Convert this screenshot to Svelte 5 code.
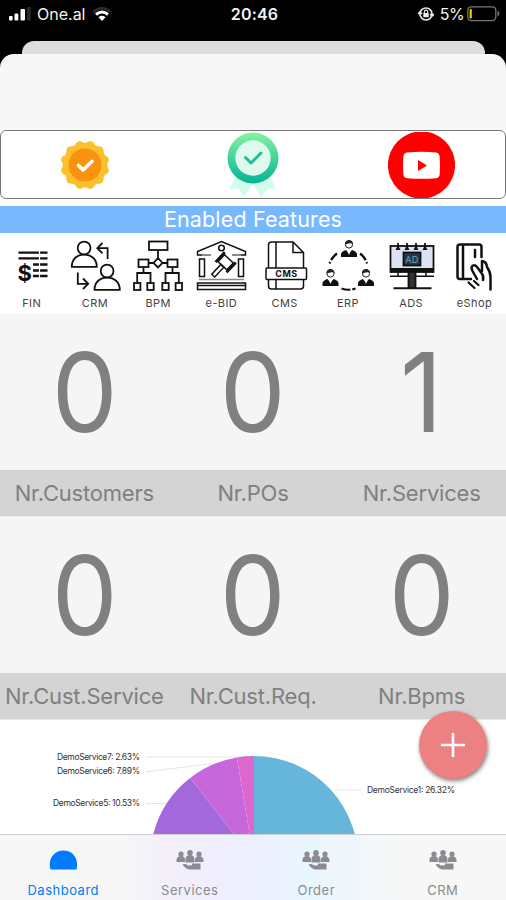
<script>
    const stats = [
        [
            { label: 'Nr.Customers', value: 0 },
            { label: 'Nr.POs', value: 0 },
            { label: 'Nr.Services', value: 1 },
        ],
        [
            { label: 'Nr.Cust.Service', value: 0 },
            { label: 'Nr.Cust.Req.', value: 0 },
            { label: 'Nr.Bpms', value: 0 },
        ],
    ];

    const features = ['FIN', 'CRM', 'BPM', 'e-BID', 'CMS', 'ERP', 'ADS', 'eShop'];
    const tabs = ['Dashboard', 'Services', 'Order', 'CRM'];

    // pie is drawn clockwise from 12 o'clock, in percent
    const slices = [
        { from: 0, to: 26.32, color: '#66b5db' },
        { from: 26.32, to: 78.95, color: '#6771dc' },
        { from: 78.95, to: 89.48, color: '#a268dc' },
        { from: 89.48, to: 97.37, color: '#c767dc' },
        { from: 97.37, to: 100, color: '#dc67ce' },
    ];
    const cx = 254;
    const cy = 140;
    const r = 104;

    function point(percent) {
        const a = (percent / 100) * Math.PI * 2;
        return `${cx + r * Math.sin(a)} ${cy - r * Math.cos(a)}`;
    }

    function slicePath(s) {
        const large = s.to - s.from > 50 ? 1 : 0;
        return `M${cx} ${cy}L${point(s.from)}A${r} ${r} 0 ${large} 1 ${point(s.to)}Z`;
    }

    // twelve-lobed seal
    const seal = Array.from({ length: 73 }, (_, i) => {
        const a = ((i + 3) / 72) * Math.PI * 2;
        const d = 23.4 + 1.3 * Math.cos(12 * (a - Math.PI / 12));
        return `${(25 + d * Math.cos(a)).toFixed(2)},${(25 + d * Math.sin(a)).toFixed(2)}`;
    }).join(' ');

    let active = 'Dashboard';
</script>

{#snippet worker(x, y)}
    <g transform="translate({x} {y})">
        <circle cx="0" cy="5" r="3.6" fill="#fff" stroke="#222" stroke-width="1" />
        <path d="M-4 5C-4.500-1 4.500-1 4 5C2 2.500-1 4-4 5Z" fill="#222" stroke="none" />
        <path d="M-8 17.500V14.500Q-7.500 12-3 10.500L0 14L3 10.500Q7.500 12 8 14.500V17.500Z" fill="#111" stroke="none" />
        <path d="M-2 10.500L0 15.500L2 10.500Z" fill="#fff" stroke="none" />
    </g>
{/snippet}

<div class="screen">
    <header class="status">
        <div class="side">
            <svg class="signal" width="22" height="14" viewBox="0 0 22 14" fill="#fff">
                <rect x="0" y="9" width="3.600" height="4.500" rx="1" />
                <rect x="5.500" y="6.500" width="3.800" height="7" rx="1" />
                <rect x="11.500" y="2" width="4.500" height="11.500" rx="1" />
                <rect x="18" y="0" width="3.800" height="13.500" rx="1" fill="#2a2a2a" />
            </svg>
            <span class="carrier">One.al</span>
            <svg class="wifi" width="20" height="15" viewBox="0 0 20 15" fill="none" stroke-width="2.400">
                <path d="M1.500 5Q10-2.500 18.500 5" stroke="#2d2d2d" />
                <path d="M4 7.500Q10 2.500 16 7.500" stroke="#fff" stroke-width="3" />
                <path d="M6.500 10.200Q10 7.300 13.500 10.200L10 14Z" fill="#fff" />
            </svg>
        </div>
        <span class="time">20:46</span>
        <div class="side right">
            <svg class="lock" width="16" height="14" viewBox="0 0 16 14" fill="none" stroke="#eee" stroke-width="1.600">
                <path d="M3.500 11A6 6 0 1 1 12.500 11A6 6 0 0 1 3.500 11M0 7L2 5L4 7M12 7L14 9L16 7" />
                <rect x="5.300" y="6" width="5.400" height="4.200" rx="0.500" fill="#eee" stroke="none" />
                <path d="M6.300 6V4.800A1.700 1.700 0 0 1 9.700 4.800V6" stroke-width="1.100" />
            </svg>
            <span class="percent">5%</span>
            <svg class="battery" width="33" height="16" viewBox="0 0 33 16">
                <rect x="0.800" y="0.800" width="28" height="13.800" rx="3.500" fill="none" stroke="#777" stroke-width="1.300" />
                <rect x="2.600" y="3" width="2.200" height="9.500" rx="0.800" fill="#f6cd00" />
                <path d="M30.500 5V10.500Q32.500 9.500 32.500 7.700T30.500 5Z" fill="#777" />
            </svg>
        </div>
    </header>

    <div class="sheet-behind"></div>

    <main class="sheet">
        <section class="badges">
            <div class="badge">
                <svg width="50" height="50" viewBox="0 0 50 50">
                    <polygon points={seal} fill="#fdbf2e" />
                    <circle cx="25" cy="25" r="16.500" fill="#f7930f" />
                    <path d="M18.500 25.500L23 30L32 21.500" fill="none" stroke="#fff" stroke-width="3.600" stroke-linecap="round" stroke-linejoin="round" />
                </svg>
            </div>
            <div class="badge">
                <svg width="52" height="66" viewBox="0 0 52 66">
                    <defs>
                        <linearGradient id="medal" x1="0" y1="0" x2="0" y2="1">
                            <stop offset="0" stop-color="#86f3a0" />
                            <stop offset="1" stop-color="#05b395" />
                        </linearGradient>
                    </defs>
                    <path d="M10 42L2.500 57L11 56.500L17.500 65L25.500 51L34 65L40.500 56.500L49 57L41.500 42Z" fill="#d1fce9" />
                    <circle cx="26" cy="26" r="25.500" fill="url(#medal)" />
                    <circle cx="26" cy="26" r="17.700" fill="#dcfbee" />
                    <path d="M18.500 25.500L24 31L34 21" fill="none" stroke="#22bd95" stroke-width="3" stroke-linecap="round" stroke-linejoin="round" />
                </svg>
            </div>
            <div class="badge">
                <svg width="67" height="66" viewBox="0 0 67 66">
                    <circle cx="33.500" cy="33" r="33.600" fill="#fe0000" />
                    <path d="M19 20.500Q33.500 19 48 20.500Q51.500 21 51.700 25Q52.300 33.500 51.700 42Q51.500 45.800 48 46.200Q33.500 47.500 19 46.200Q15.500 45.800 15.300 42Q14.700 33.500 15.300 25Q15.500 21 19 20.500Z" fill="#fff" />
                    <path d="M30 28L39 33.500L30 39Z" fill="#fe0000" />
                </svg>
            </div>
        </section>

        <h2 class="banner">Enabled Features</h2>

        <section class="features">
            {#each features as feature}
                <div class="feature">
                    <svg width="54" height="54" viewBox="0 0 54 54" fill="none" stroke="#111" stroke-width="1.800">
                        {#if feature === 'FIN'}
                            <path d="M13.500 13.700H42.500M13.500 19.300H42.500M28 25.500H42.500M28 31.500H42.500M28 37H42.500" stroke-width="2.300" />
                            <path d="M34.500 11V39" stroke="#fff" stroke-width="1.200" />
                            <text class="dollar" x="12.500" y="42">$</text>
                        {:else if feature === 'CRM'}
                            <circle cx="16.100" cy="9" r="6.400" />
                            <path d="M3.800 27.800C3.800 20 9 15.600 16.100 15.600S28.800 20 28.800 27.800Z" />
                            <circle cx="39.100" cy="32" r="6.400" />
                            <path d="M26.500 50.800C26.500 43 32 38.600 39.100 38.600S51.800 43 51.800 50.800Z" />
                            <path d="M39.600 20V9.200H29.500M34.500 4L29.300 9.200L34.500 14.400" />
                            <path d="M9.800 33.500V44.800H20M15 39.500L20.200 44.800L15 50" />
                        {:else if feature === 'BPM'}
                            <rect x="18" y="2.500" width="18.500" height="8.500" />
                            <path d="M27 11V19M27 19L31.500 24L27 28.500L22.500 24ZM17.500 24H22.500M31.500 24H36.500" />
                            <rect x="7.500" y="20.500" width="10" height="7.500" />
                            <rect x="36.500" y="20.500" width="10" height="7.500" />
                            <path d="M12.500 28V34M6.200 44V34H19.500V44M41.500 28V34M34.500 44V34H47.800V44" />
                            <rect x="3" y="44" width="6.400" height="7" />
                            <rect x="16.300" y="44" width="6.400" height="7" />
                            <rect x="31.300" y="44" width="6.400" height="7" />
                            <rect x="44.600" y="44" width="6.400" height="7" />
                        {:else if feature === 'e-BID'}
                            <g stroke-width="1.500">
                                <path d="M8 16H3.500V12.500L27.500 2.500L51.500 12.500V16H47" />
                                <circle cx="27.500" cy="9" r="2.800" />
                                <path d="M8 16H17M38 16H47" stroke="#666" />
                                <rect x="5.500" y="20" width="5" height="17.500" />
                                <rect x="44.500" y="20" width="5" height="17.500" />
                                <path d="M5 40.500H50" stroke="#888" />
                                <rect x="3.500" y="44" width="48" height="6.500" />
                                <path d="M3.500 46.500H51.500" />
                                <g transform="rotate(43 31.500 23.500)">
                                    <rect x="25.500" y="18.500" width="12" height="9.500" />
                                    <path d="M24 16.500V30M39 16.500V30" stroke-width="2.800" />
                                    <rect x="29.500" y="28" width="4" height="13.500" />
                                </g>
                            </g>
                        {:else if feature === 'CMS'}
                            <g stroke-width="1.500">
                                <path d="M10.500 29V6Q10.500 3 13.500 3H35L45.500 13.500V29M35 3V13.500H45.500M18 3V29M18 40.500V50M10.500 40.500V47Q10.500 50 13.500 50H42.500Q45.500 50 45.500 47V40.500" />
                                <rect x="8" y="29" width="40.500" height="11.500" rx="1" />
                            </g>
                            <text class="cms" x="28.500" y="38.200" text-anchor="middle">CMS</text>
                        {:else if feature === 'ERP'}
                            {@render worker(28, 0.5)}
                            {@render worker(9.5, 29.5)}
                            {@render worker(45, 29.5)}
                            <path d="M39 14.500Q44 18 46 24.500M16 14.500Q11 18 8.500 24.500M20.500 49.500Q27.500 52 34.500 49.500" stroke-width="2.200" stroke-dasharray="9 2" />
                        {:else if feature === 'ADS'}
                            <rect x="6.500" y="7" width="43" height="26" fill="#dce2f2" />
                            <path d="M6 31H50" stroke-width="4" />
                            <rect x="19.500" y="13.500" width="17" height="13" fill="#26394a" />
                            <text class="ad" x="28" y="23.500" text-anchor="middle">AD</text>
                            <path d="M14 4V8M23 4V8M32 4V8M41 4V8" />
                            <path d="M11.500 11L14 6L16.500 11ZM20.500 11L23 6L25.500 11ZM29.500 11L32 6L34.500 11ZM38.500 11L41 6L43.500 11Z" fill="#111" stroke="none" />
                            <path d="M6 37.200H50M14 33V38M42 33V38" stroke-width="1.500" />
                            <rect x="24.500" y="33" width="7" height="16" fill="#333" />
                            <path d="M9.500 49.300H47.500" stroke-width="2" />
                        {:else}
                            <g stroke-width="2.500" stroke-linecap="round" stroke-linejoin="round">
                                <path d="M34.500 18V8Q34.500 5.500 32 5.500H13Q10.500 5.500 10.500 8V37.500Q10.500 40 13 40H24M16 6V40M28 11V18" />
                                <path d="M30 40L25.500 32Q23.500 28 26 26.500Q28 25.500 30 28L34.500 34Q37 37 36 41M35 32V22Q39.500 22.500 40 28Q43.500 33 43.500 38V50.500" />
                                <path d="M21.500 43.500L27.500 49M27 42L31.500 46" stroke-width="2.200" />
                            </g>
                        {/if}
                    </svg>
                    <span>{feature}</span>
                </div>
            {/each}
        </section>

        {#each stats as row}
            <section class="stats">
                {#each row as stat}
                    <div class="stat">
                        <div class="value"><span>{stat.value}</span></div>
                        <div class="label">{stat.label}</div>
                    </div>
                {/each}
            </section>
        {/each}

        <section class="chart">
            <svg width="506" height="250" viewBox="0 0 506 250">
                <g fill="none" stroke="#e6e6e6">
                    <path d="M146 37H232L249 36.500" />
                    <path d="M146 52L165 49.500L212 43.500" />
                    <path d="M146 83.500H172" />
                    <path d="M334 70H362" />
                </g>
                {#each slices as s}
                    <path d={slicePath(s)} fill={s.color} />
                {/each}
                <text x="57" y="39.500" textLength="83">DemoService7: 2.63%</text>
                <text x="57" y="54" textLength="83">DemoService6: 7.89%</text>
                <text x="53" y="86" textLength="87">DemoService5: 10.53%</text>
                <text x="367" y="72.500" textLength="88">DemoService1: 26.32%</text>
            </svg>
        </section>

        <button class="fab" aria-label="Add">
            <svg width="26" height="26" viewBox="0 0 26 26" stroke="#fff" stroke-width="2.600">
                <path d="M13 1V25M1 13H25" />
            </svg>
        </button>
    </main>

    <nav class="tabs">
        {#each tabs as tab}
            <button class="tab" class:active={tab === active} on:click={() => (active = tab)}>
                <svg width="28" height="20" viewBox="0 0 28 20" fill="currentColor">
                    {#if tab === 'Dashboard'}
                        <path d="M1.500 19.500C-1.500 9 5 0.500 14.500 0.500S30 9 27.500 19.500Z" />
                    {:else}
                        <circle cx="5" cy="4" r="2.600" />
                        <circle cx="14" cy="2.800" r="2.800" />
                        <circle cx="23" cy="4" r="2.600" />
                        <path d="M0.500 12V9.500Q1 6 5 6T9 9.500V12ZM9.500 12.500V9Q10 5 14 5T18.500 9V12.500ZM19 12V9.500Q19.500 6 23 6T27.500 9.500V12Z" />
                        <path d="M6.500 14.500Q9 13.300 12 15.500L16 15.200V13.500H24.500V19.500H13Q9 18.500 6.500 14.500Z" />
                    {/if}
                </svg>
                <span>{tab}</span>
            </button>
        {/each}
    </nav>
</div>

<style>
    :global(body) {
        margin: 0;
        background: #000;
    }
    .screen {
        width: 506px;
        height: 900px;
        display: flex;
        flex-direction: column;
        overflow: hidden;
        background: #000;
        font-family: Inter, "Liberation Sans", sans-serif;
    }
    svg {
        display: block;
        flex: none;
    }
    button {
        border: none;
        padding: 0;
        font-family: inherit;
    }

    .status {
        height: 41px;
        flex: none;
        display: grid;
        grid-template-columns: 1fr auto 1fr;
        box-sizing: border-box;
        padding: 3px 6px 16px 9px;
        align-items: center;
        color: #f2f2f2;
        font-size: 16px;
    }
    .side {
        display: flex;
        align-items: center;
    }
    .right {
        justify-content: flex-end;
    }
    .carrier {
        margin: 0 7px 0 6px;
    }
    .time {
        font-weight: 600;
        letter-spacing: 0.2px;
    }
    .percent {
        margin: 0 3px 0 6px;
        letter-spacing: -0.6px;
    }

    .sheet-behind {
        height: 13px;
        flex: none;
        margin: 0 21px 0 22px;
        border-radius: 12px 12px 0 0;
        background: #dedede;
    }
    .sheet {
        position: relative;
        flex: 1;
        min-height: 0;
        display: flex;
        flex-direction: column;
        overflow: hidden;
        padding-top: 76px;
        border-radius: 14px 14px 0 0;
        background: linear-gradient(#f7f7f7 76px, #fff 76px);
    }

    .badges {
        height: 69px;
        flex: none;
        box-sizing: border-box;
        display: grid;
        grid-template-columns: repeat(3, 1fr);
        border: 1.5px solid #777;
        border-radius: 6px;
    }
    .badge {
        display: flex;
        align-items: center;
        justify-content: center;
    }

    .banner {
        flex: none;
        height: 27px;
        margin: 7px 0 0;
        background: #78b8ff;
        color: #fff;
        font-size: 21.5px;
        font-weight: 400;
        line-height: 27px;
        letter-spacing: 0.15px;
        text-align: center;
    }

    .features {
        height: 81px;
        flex: none;
        display: grid;
        grid-template-columns: repeat(8, 1fr);
        box-sizing: border-box;
        padding-top: 6px;
    }
    .feature {
        display: flex;
        flex-direction: column;
        align-items: center;
        color: #444;
        font-size: 11px;
        line-height: 14px;
        letter-spacing: 0.4px;
    }
    .feature span {
        margin-top: 3px;
    }
    .dollar {
        font-size: 22px;
        font-weight: 700;
        fill: #111;
        stroke: none;
    }
    .cms {
        font-size: 9px;
        font-weight: 700;
        letter-spacing: 0.5px;
        fill: #111;
        stroke: none;
    }
    .ad {
        font-size: 9px;
        fill: #6f9cb0;
        stroke: none;
    }

    .stats {
        flex: none;
        display: grid;
        grid-template-columns: repeat(3, 1fr);
        color: #808080;
        text-align: center;
        border-bottom: 1px solid #ececec;
    }
    .value {
        height: 156px;
        background: #f5f5f5;
        font-size: 110px;
        line-height: 156px;
    }
    .value span {
        display: inline-block;
        transform: scaleX(0.95);
    }
    .label {
        height: 46px;
        background: #d4d4d4;
        font-size: 22px;
        line-height: 46px;
        letter-spacing: -0.2px;
        white-space: nowrap;
    }

    .chart {
        flex: 1;
        min-height: 0;
        overflow: hidden;
    }
    .chart text {
        font-size: 8.5px;
        fill: #333;
    }

    .fab {
        position: absolute;
        top: 657px;
        right: 19px;
        width: 68px;
        height: 68px;
        display: flex;
        align-items: center;
        justify-content: center;
        border-radius: 50%;
        background: #ed8080;
        box-shadow: 1px 2px 4px rgba(0, 0, 0, 0.5);
    }

    .tabs {
        height: 66px;
        flex: none;
        box-sizing: border-box;
        display: grid;
        grid-template-columns: repeat(4, 1fr);
        border-top: 1px solid #d0d0d3;
        background: linear-gradient(90deg, #f7f7f7 22%, #f2eefc 36%, #eeeeff 49%, #e8f6ff 60%, #f3f7f9 75%, #f7f7f7 82%);
    }
    .tab {
        display: flex;
        flex-direction: column;
        align-items: center;
        padding-top: 15px;
        background: none;
        color: #8b8b91;
        font-size: 13px;
        line-height: 16px;
        letter-spacing: 0.5px;
    }
    .tab span {
        margin-top: 12px;
    }
    .tab.active {
        color: #007aff;
    }
</style>
